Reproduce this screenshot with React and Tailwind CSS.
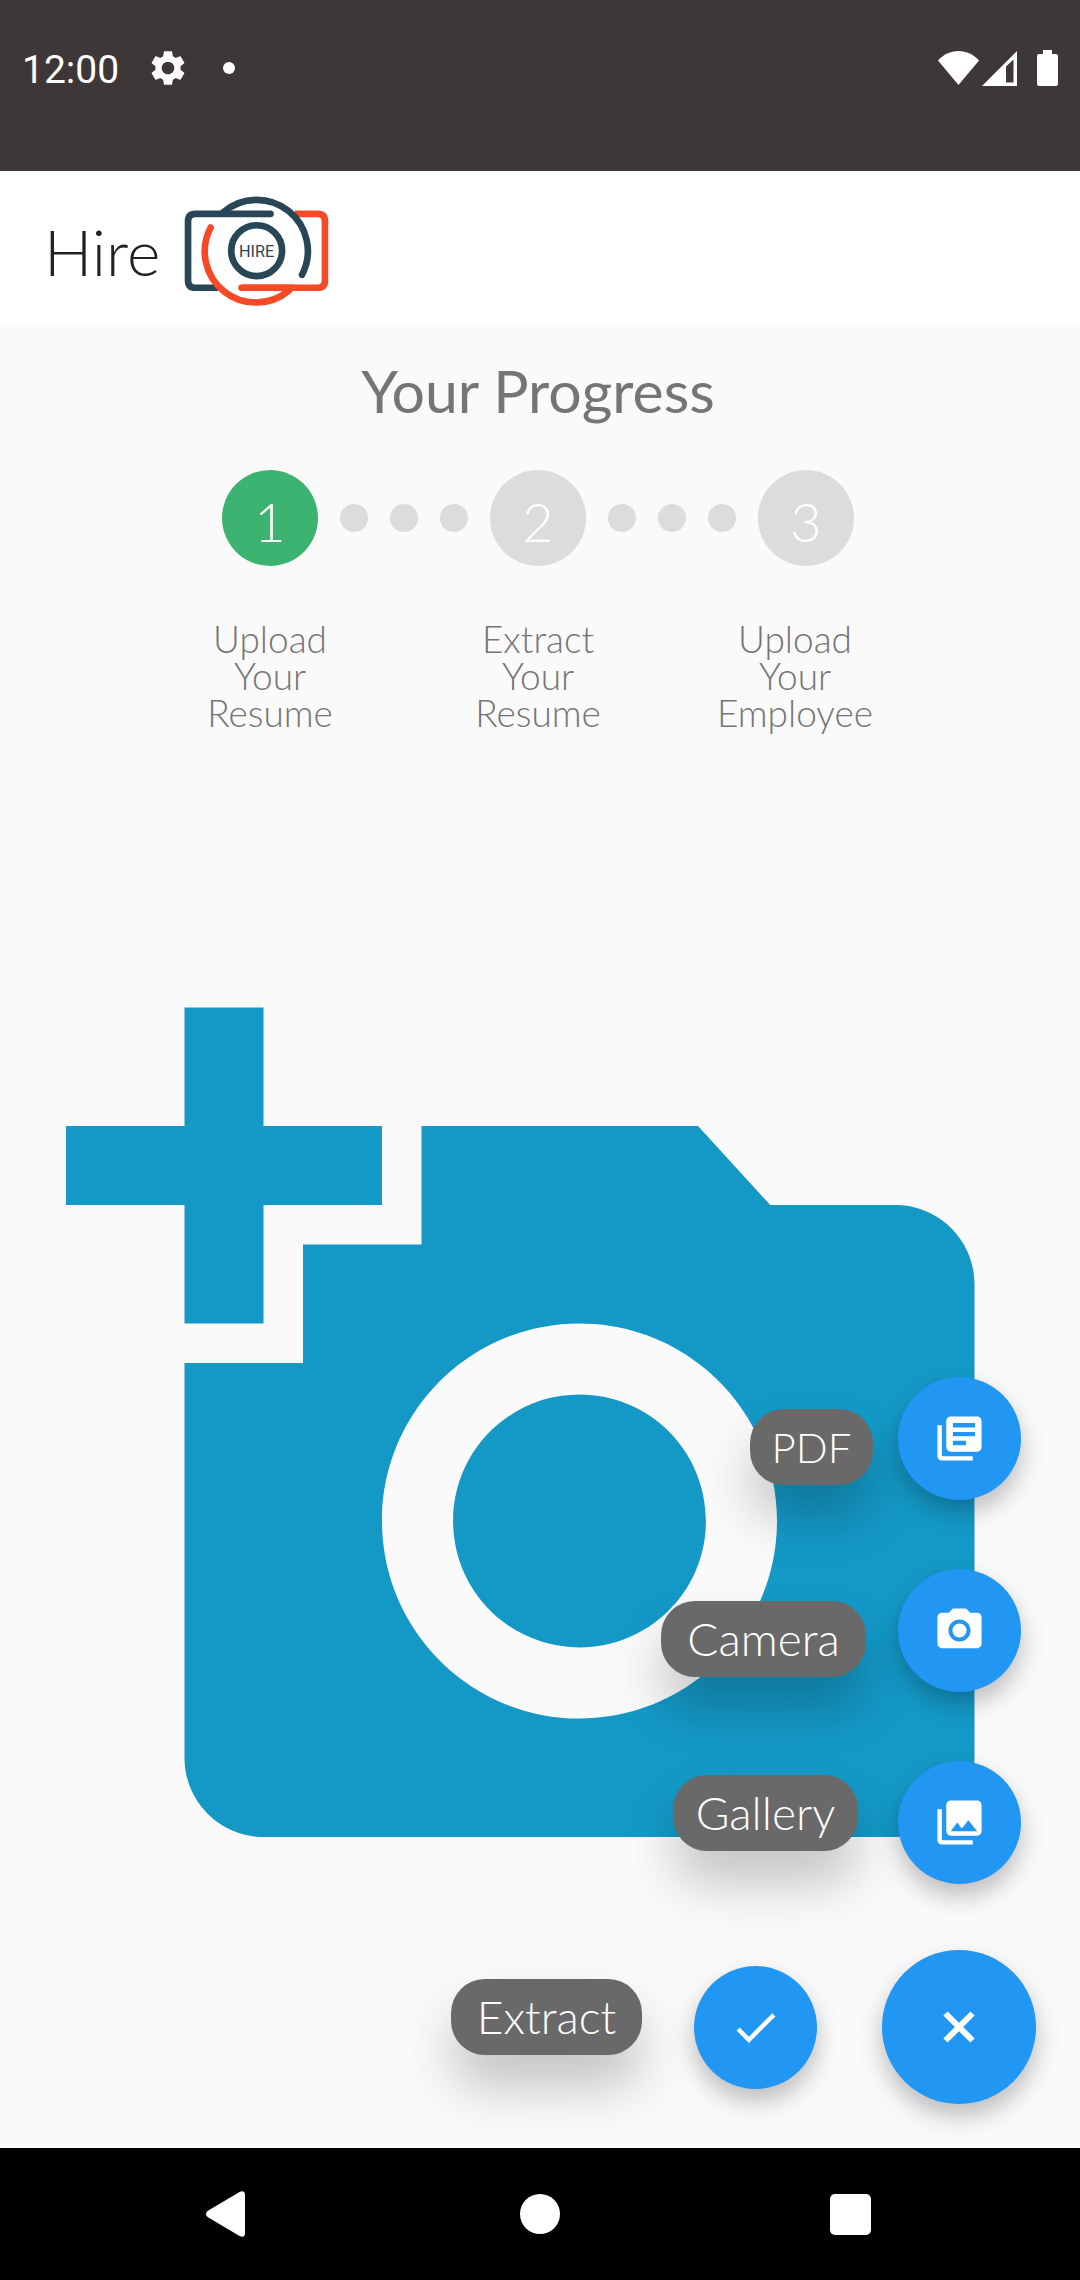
import { MdSettings, MdLibraryBooks, MdCameraAlt, MdPhotoLibrary, MdCheck, MdAddAPhoto } from 'react-icons/md';

const round = "font-[Lato,'Open_Sans',sans-serif] font-light";

function StatusBar() {
  return (
    <div className="flex h-[171px] items-start justify-between bg-[#3d3737] px-[22px] pt-[46px] text-white">
      <div className="flex h-11 items-center">
        <span className="pt-1 font-[Roboto,sans-serif] text-[39px] leading-[44px] font-normal">12:00</span>
        <MdSettings className="ml-7 size-[42px]" />
        <span className="ml-[34px] size-3 rounded-full bg-white" />
      </div>
      <div className="flex h-11 items-center">
        <svg viewBox="0 0 41 34" className="h-[34px] w-[41px]" fill="currentColor">
          <path d="M0 9.500C5.500 3.500 12.500 0 20.500 0S35.500 3.500 41 9.500L20.500 34Z" />
        </svg>
        <svg viewBox="0 0 35 35" className="ml-[3px] size-[35px]" fill="currentColor" fillRule="evenodd">
          <path d="M0 35 35 0V35ZM24 15.500V31.500H31.500V8.500Z" />
        </svg>
        <svg viewBox="0 0 21 36" className="ml-5 h-9 w-[21px]" fill="currentColor">
          <path d="M6 0h9v4h4q2 0 2 2v28q0 2-2 2H2q-2 0-2-2V6q0-2 2-2h4z" />
        </svg>
      </div>
    </div>
  );
}

function Logo() {
  return (
    <svg viewBox="60 40 460 340" className="h-[113px] w-[153px]" fill="none" strokeWidth="20" strokeLinecap="round" role="img" aria-label="Hire camera logo">
      <path stroke="#f54927" strokeLinecap="butt" d="M405 100H474Q496 100 496 122V300Q496 322 474 322H245" />
      <path stroke="#284655" d="M332 100H106Q84 100 84 122V300Q84 322 106 322H170" />
      <path stroke="#f54927" d="M245 322H400" />
      <path stroke="#284655" d="M190 95A154 154 0 0 1 427 283" />
      <path stroke="#f54927" d="M152 141A154 154 0 0 0 388 330" />
      <circle cx="290.500" cy="210.500" r="76.500" stroke="#284655" />
      <text x="290.500" y="229" textAnchor="middle" fill="#284655" className="font-[Roboto,sans-serif] text-[49px] font-normal">HIRE</text>
    </svg>
  );
}

function Step({ n, active }) {
  return (
    <span className={`flex size-24 items-center justify-center rounded-full pt-2 text-[54px] leading-none text-white ${active ? 'bg-[#3cb371]' : 'bg-[#dcdcdc]'}`}>
      {n}
    </span>
  );
}

function Dots() {
  return [0, 1, 2].map((i) => <span key={i} className="size-7 rounded-full bg-[#dcdcdc]" />);
}

function Pill({ children, className, id }) {
  return (
    <label htmlFor={id} className={`flex h-[76px] items-center justify-center rounded-[34px] bg-[#696969] leading-[52px] text-white shadow-[0_32px_52px_rgba(0,0,0,0.22)] ${className}`}>
      {children}
    </label>
  );
}

function Fab({ id, icon: Icon }) {
  return (
    <button id={id} type="button" className="flex size-[123px] items-center justify-center rounded-full bg-[#2196f3] text-white shadow-[0_12px_24px_rgba(0,0,0,0.25)]">
      <Icon className="size-[53px]" />
    </button>
  );
}

export default function App() {
  return (
    <div className={`flex min-h-screen flex-col bg-[#fafafa] ${round}`}>
      <StatusBar />
      <header className="flex h-[154px] items-center bg-white pl-11">
        <h1 className="w-[117px] pt-2 text-[64px] leading-[72px] text-[#212121]">Hire</h1>
        <div className="ml-[19px] pt-[5px]"><Logo /></div>
      </header>

      <main className="relative flex-1 text-[#757575]">
        <h2 className="mr-1 pt-8 text-center text-[59px] leading-[68px] font-normal">Your Progress</h2>
        <div className="mt-[45px] mr-1 flex items-center justify-center gap-[22px]">
          <Step n={1} active />
          <Dots />
          <Step n={2} />
          <Dots />
          <Step n={3} />
        </div>
        <div className="mt-[54px] mr-[26px] grid grid-cols-[268px_268px_246px] justify-center text-center text-[37px] leading-[37px]">
          <p>Upload<br />Your<br />Resume</p>
          <p>Extract<br />Your<br />Resume</p>
          <p>Upload<br />Your<br />Employee</p>
        </div>
        <MdAddAPhoto className="mx-auto mt-[237px] size-[948px] text-[#1499c7]" />

        <div className="absolute right-11 bottom-11 flex flex-col items-end">
          <div className="mr-[15px] mb-[69px] flex items-start">
            <Pill id="pdf" className="mt-8 mr-[25px] w-[123px] text-[42px]">PDF</Pill>
            <Fab id="pdf" icon={MdLibraryBooks} />
          </div>
          <div className="mr-[15px] mb-[69px] flex items-start">
            <Pill id="camera" className="mt-8 mr-8 w-[205px] text-[46px]">Camera</Pill>
            <Fab id="camera" icon={MdCameraAlt} />
          </div>
          <div className="mr-[15px] mb-[66px] flex items-start">
            <Pill id="gallery" className="mt-[14px] mr-10 w-[185px] text-[46px]">Gallery</Pill>
            <Fab id="gallery" icon={MdPhotoLibrary} />
          </div>
          <div className="flex items-center">
            <div className="mr-[65px] flex items-start">
              <Pill id="extract" className="mt-[13px] mr-[52px] w-[191px] text-[46px]">Extract</Pill>
              <Fab id="extract" icon={MdCheck} />
            </div>
            <button type="button" aria-label="Close" className="flex size-[154px] items-center justify-center rounded-full bg-[#2196f3] text-white shadow-[0_12px_24px_rgba(0,0,0,0.25)]">
              <svg viewBox="0 0 32 32" className="size-8" fill="none" stroke="currentColor" strokeWidth="6">
                <path d="M2.500 2.500 29.500 29.500M29.500 2.500 2.500 29.500" />
              </svg>
            </button>
          </div>
        </div>
      </main>

      <nav className="flex h-[132px] items-center justify-center bg-black pr-2 text-white">
        <button type="button" aria-label="Back" className="flex w-[316px] justify-center">
          <svg viewBox="0 0 39 46" className="h-[46px] w-[39px]" fill="currentColor">
            <path d="M1.500 20 34 .7Q39-1 39 4V42Q39 47 34 45.300L1.500 26Q-1.500 23 1.500 20Z" />
          </svg>
        </button>
        <button type="button" aria-label="Home" className="flex w-[313px] justify-center">
          <span className="size-10 rounded-full bg-white" />
        </button>
        <button type="button" aria-label="Recents" className="flex w-[308px] justify-center">
          <span className="size-[41px] rounded-[5px] bg-white" />
        </button>
      </nav>
    </div>
  );
}
